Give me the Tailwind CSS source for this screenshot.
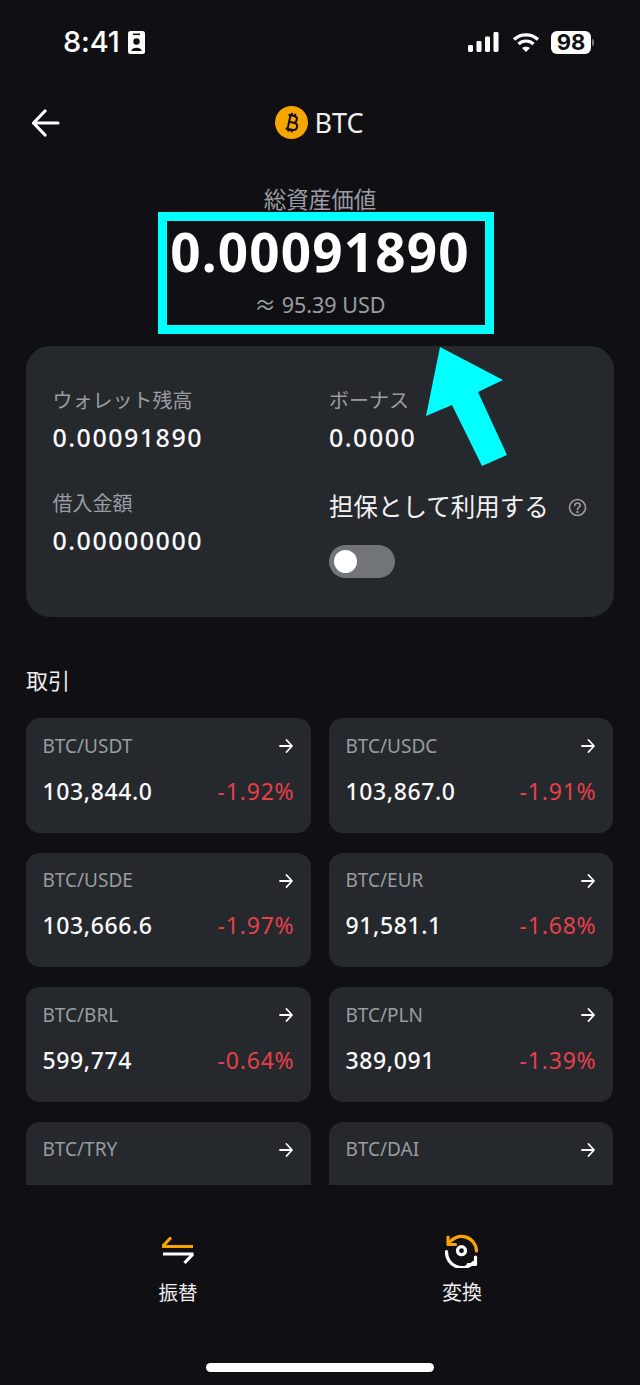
<!DOCTYPE html>
<html lang="ja">
<head>
<meta charset="utf-8">
<script src="https://cdn.jsdelivr.net/npm/@tailwindcss/browser@4"></script>
</head>
<body class="m-0 bg-[#101014]">
<div class="relative w-[640px] h-[1385px] overflow-hidden bg-[#101014] text-white font-['Noto_Sans','Noto_Sans_CJK_JP',sans-serif]">

  <!-- status bar -->
  <div class="h-[84px] flex items-start justify-between pl-[63px] pr-[46px] pt-[27px]">
    <div class="flex items-center gap-[8px] h-[30px]">
      <span class="text-[29px] leading-[30px] font-medium font-['Inter',sans-serif] tracking-[-0.2px]">8:41</span>
      <svg width="17" height="23" viewBox="0 0 17 23"><rect width="17" height="23" rx="2.500" fill="#fff"/><rect x="5" y="2.500" width="7" height="1.600" fill="#101014"/><circle cx="8.500" cy="10.500" r="3.200" fill="#101014"/><path d="M3.300 20 C3.700 15.600 13.300 15.600 13.700 20Z" fill="#101014"/></svg>
    </div>
    <div class="flex items-center h-[30px]">
      <svg width="32" height="21" viewBox="0 0 32 21" fill="#fff"><rect x="0" y="13" width="5" height="7" rx="1.400"/><rect x="8.500" y="9" width="5" height="11" rx="1.400"/><rect x="17" y="4.500" width="5" height="15.500" rx="1.400"/><rect x="25.500" y="0" width="5" height="20" rx="1.400"/></svg>
      <svg class="ml-[12px]" width="28" height="21" viewBox="0 0 27 21" fill="none" stroke="#fff" stroke-width="3.200"><path d="M1.500 7.500 C8 1.200 19 1.200 25.500 7.500"/><path d="M6 12 C10 8 17 8 21 12"/><path d="M13.500 20 L9.600 16 C11.600 14.200 15.400 14.200 17.400 16Z" fill="#fff" stroke="none"/></svg>
      <div class="ml-[11px] w-[40px] h-[23px] rounded-[6px] bg-white text-[#101014] text-[22px] leading-[23px] font-bold text-center font-['Inter',sans-serif]">98</div>
      <div class="ml-[1px] w-[2px] h-[7px] rounded-r bg-[#77777a]"></div>
    </div>
  </div>

  <!-- nav -->
  <div class="relative h-[78px] flex items-center justify-center">
    <svg class="absolute left-[32px] top-[25px]" width="28" height="28" viewBox="0 0 28 28" fill="none" stroke="#fff" stroke-width="3.200" stroke-linecap="round" stroke-linejoin="round"><path d="M26 14H2"/><path d="M13 2 L1.500 14 L13 26"/></svg>
    <div class="flex items-center gap-[6px] ml-[-1px] mt-[-2px]">
      <svg width="33" height="33" viewBox="0 0 33 33"><circle cx="16.500" cy="16.500" r="16.500" fill="#f7a600"/><g transform="rotate(12 16.500 16.500)" fill="none" stroke="#101014" stroke-width="2"><path d="M12 9.500h6c4.200 0 4.200 6.600 0 6.800h-5M13 16.300h6.500c4.500 0 4.500 7.200 0 7.200h-7.500M14 9.500v14M15 7v3M18.500 7v3M15 23v3M18.500 23v3"/></g></svg>
      <span class="text-[27px] leading-[33px] text-[#f0f0f0]">BTC</span>
    </div>
  </div>

  <!-- summary -->
  <div class="h-[184px] flex flex-col items-center">
    <div class="mt-[22px] h-[32px] text-[22.500px] leading-[32px] text-[#9a9ca1]">総資産価値</div>
    <div class="mt-[10px] h-[52px] text-[53px] leading-[52px] font-bold tracking-[1.200px]">0.00091890</div>
    <div class="mt-[12px] h-[30px] text-[21.500px] leading-[30px] text-[#9a9ca1]">≈ 95.39 USD</div>
  </div>

  <!-- balance card -->
  <div class="mx-[26px] h-[271px] rounded-[24px] bg-[#25282c] grid grid-cols-[276.500px_1fr] pl-[26.500px] pt-[41px]">
    <div>
      <div class="text-[20px] leading-[28px] text-[#9a9ca1]">ウォレット残高</div>
      <div class="mt-[5px] text-[25px] leading-[34px] font-medium tracking-[1.500px] text-[#fafafa]">0.00091890</div>
      <div class="mt-[36px] text-[20px] leading-[28px] text-[#9a9ca1]">借入金額</div>
      <div class="mt-[5px] text-[25px] leading-[34px] font-medium tracking-[1.500px] text-[#fafafa]">0.00000000</div>
    </div>
    <div>
      <div class="text-[20px] leading-[28px] text-[#9a9ca1]">ボーナス</div>
      <div class="mt-[5px] text-[25px] leading-[34px] font-medium tracking-[1.500px] text-[#fafafa]">0.0000</div>
      <div class="mt-[36px] flex items-center">
        <span class="text-[24.500px] leading-[34px] text-[#f2f2f2]">担保として利用する</span>
        <svg class="ml-[19px]" width="19" height="19" viewBox="0 0 19 19" fill="none" stroke="#9a9ca1" stroke-width="1.600"><circle cx="9.500" cy="9.500" r="8"/><path d="M6.800 7.500c0-3.400 5.400-3.400 5.400 0 0 2-2.700 1.900-2.700 3.900" stroke-linecap="round"/><circle cx="9.500" cy="14" r="0.500"/></svg>
      </div>
      <div class="mt-[21px] w-[66px] h-[33px] rounded-full bg-[#71757a] flex items-center pl-[5px]"><div class="w-[23px] h-[23px] rounded-full bg-white"></div></div>
    </div>
  </div>

  <!-- trade section -->
  <div class="mx-[26px] mt-[45px] text-[22px] leading-[36px] text-[#ececec]">取引</div>
  <div class="mx-[26px] mt-[20px] h-[467px] overflow-hidden grid grid-cols-[285px_284px] gap-x-[18px] gap-y-[20px] content-start">

    <div class="h-[114.500px] rounded-[14px] bg-[#25282c] px-[16.500px] pt-[15px]">
      <div class="flex items-center justify-between h-[26px]"><span class="text-[19px] text-[#9a9ca1]">BTC/USDT</span><svg class="mr-[2px]" width="14" height="14" viewBox="0 0 14 14" fill="none" stroke="#fff" stroke-width="1.800" stroke-linecap="round" stroke-linejoin="round"><path d="M1 7h12M7.500 1 13 7l-5.500 6"/></svg></div>
      <div class="mt-[18px] flex items-center justify-between h-[28px]"><span class="text-[23px] font-medium tracking-[0.600px] text-[#fafafa]">103,844.0</span><span class="text-[23px] tracking-[0.800px] text-[#e5404b]">-1.92%</span></div>
    </div>
    <div class="h-[114.500px] rounded-[14px] bg-[#25282c] px-[16.500px] pt-[15px]">
      <div class="flex items-center justify-between h-[26px]"><span class="text-[19px] text-[#9a9ca1]">BTC/USDC</span><svg class="mr-[2px]" width="14" height="14" viewBox="0 0 14 14" fill="none" stroke="#fff" stroke-width="1.800" stroke-linecap="round" stroke-linejoin="round"><path d="M1 7h12M7.500 1 13 7l-5.500 6"/></svg></div>
      <div class="mt-[18px] flex items-center justify-between h-[28px]"><span class="text-[23px] font-medium tracking-[0.600px] text-[#fafafa]">103,867.0</span><span class="text-[23px] tracking-[0.800px] text-[#e5404b]">-1.91%</span></div>
    </div>
    <div class="h-[114.500px] rounded-[14px] bg-[#25282c] px-[16.500px] pt-[15px]">
      <div class="flex items-center justify-between h-[26px]"><span class="text-[19px] text-[#9a9ca1]">BTC/USDE</span><svg class="mr-[2px]" width="14" height="14" viewBox="0 0 14 14" fill="none" stroke="#fff" stroke-width="1.800" stroke-linecap="round" stroke-linejoin="round"><path d="M1 7h12M7.500 1 13 7l-5.500 6"/></svg></div>
      <div class="mt-[18px] flex items-center justify-between h-[28px]"><span class="text-[23px] font-medium tracking-[0.600px] text-[#fafafa]">103,666.6</span><span class="text-[23px] tracking-[0.800px] text-[#e5404b]">-1.97%</span></div>
    </div>
    <div class="h-[114.500px] rounded-[14px] bg-[#25282c] px-[16.500px] pt-[15px]">
      <div class="flex items-center justify-between h-[26px]"><span class="text-[19px] text-[#9a9ca1]">BTC/EUR</span><svg class="mr-[2px]" width="14" height="14" viewBox="0 0 14 14" fill="none" stroke="#fff" stroke-width="1.800" stroke-linecap="round" stroke-linejoin="round"><path d="M1 7h12M7.500 1 13 7l-5.500 6"/></svg></div>
      <div class="mt-[18px] flex items-center justify-between h-[28px]"><span class="text-[23px] font-medium tracking-[0.600px] text-[#fafafa]">91,581.1</span><span class="text-[23px] tracking-[0.800px] text-[#e5404b]">-1.68%</span></div>
    </div>
    <div class="h-[114.500px] rounded-[14px] bg-[#25282c] px-[16.500px] pt-[15px]">
      <div class="flex items-center justify-between h-[26px]"><span class="text-[19px] text-[#9a9ca1]">BTC/BRL</span><svg class="mr-[2px]" width="14" height="14" viewBox="0 0 14 14" fill="none" stroke="#fff" stroke-width="1.800" stroke-linecap="round" stroke-linejoin="round"><path d="M1 7h12M7.500 1 13 7l-5.500 6"/></svg></div>
      <div class="mt-[18px] flex items-center justify-between h-[28px]"><span class="text-[23px] font-medium tracking-[0.600px] text-[#fafafa]">599,774</span><span class="text-[23px] tracking-[0.800px] text-[#e5404b]">-0.64%</span></div>
    </div>
    <div class="h-[114.500px] rounded-[14px] bg-[#25282c] px-[16.500px] pt-[15px]">
      <div class="flex items-center justify-between h-[26px]"><span class="text-[19px] text-[#9a9ca1]">BTC/PLN</span><svg class="mr-[2px]" width="14" height="14" viewBox="0 0 14 14" fill="none" stroke="#fff" stroke-width="1.800" stroke-linecap="round" stroke-linejoin="round"><path d="M1 7h12M7.500 1 13 7l-5.500 6"/></svg></div>
      <div class="mt-[18px] flex items-center justify-between h-[28px]"><span class="text-[23px] font-medium tracking-[0.600px] text-[#fafafa]">389,091</span><span class="text-[23px] tracking-[0.800px] text-[#e5404b]">-1.39%</span></div>
    </div>
    <div class="h-[114.500px] rounded-[14px] bg-[#25282c] px-[16.500px] pt-[15px]">
      <div class="flex items-center justify-between h-[26px]"><span class="text-[19px] text-[#9a9ca1]">BTC/TRY</span><svg class="mr-[2px]" width="14" height="14" viewBox="0 0 14 14" fill="none" stroke="#fff" stroke-width="1.800" stroke-linecap="round" stroke-linejoin="round"><path d="M1 7h12M7.500 1 13 7l-5.500 6"/></svg></div>
    </div>
    <div class="h-[114.500px] rounded-[14px] bg-[#25282c] px-[16.500px] pt-[15px]">
      <div class="flex items-center justify-between h-[26px]"><span class="text-[19px] text-[#9a9ca1]">BTC/DAI</span><svg class="mr-[2px]" width="14" height="14" viewBox="0 0 14 14" fill="none" stroke="#fff" stroke-width="1.800" stroke-linecap="round" stroke-linejoin="round"><path d="M1 7h12M7.500 1 13 7l-5.500 6"/></svg></div>
    </div>
  </div>

  <!-- bottom actions -->
  <div class="mt-[50px] grid grid-cols-[356px_1fr]">
    <div class="flex flex-col items-center">
      <svg width="32" height="30" viewBox="0 0 32 30" fill="none" stroke-width="3.200"><path d="M0 11.500H31M0.500 11.500 9 2.500" stroke="#f7a600"/><path d="M1 19H31.500M31 19 22.500 28" stroke="#fff"/></svg>
      <div class="mt-[13px] text-[19.500px] leading-[30px] text-[#ececec]">振替</div>
    </div>
    <div class="flex flex-col items-center ml-[-72px]">
      <svg class="mt-[-1px]" width="34" height="34" viewBox="0 0 34 34" fill="none" stroke-width="3.200" stroke-linecap="round" stroke-linejoin="round"><path d="M3.500 10A15 15 0 0 1 31.500 17" stroke="#f7a600"/><path d="M3 3V10.500H10.500" stroke="#f7a600"/><path d="M1.500 17.500A15.500 15.500 0 0 0 28.500 28.500" stroke="#fff"/><path d="M30.500 23V30.500H23" stroke="#fff"/><circle cx="16.500" cy="16.700" r="4" stroke="#fff"/></svg>
      <div class="mt-[10px] text-[20px] leading-[30px] text-[#ececec]">変換</div>
    </div>
  </div>

  <!-- home indicator -->
  <div class="absolute left-[206px] top-[1363px] w-[228px] h-[9px] rounded-full bg-white"></div>

  <!-- annotation overlay -->
  <div class="absolute left-[158px] top-[212px] w-[336px] h-[122px] border-[9px] border-[#00ffff]"></div>
  <svg class="absolute left-0 top-0" width="640" height="500" viewBox="0 0 640 500"><polygon points="440,347 503,380 478,392 507,455 482,466 452,405 426,416" fill="#00ffff"/></svg>
</div>
</body>
</html>
